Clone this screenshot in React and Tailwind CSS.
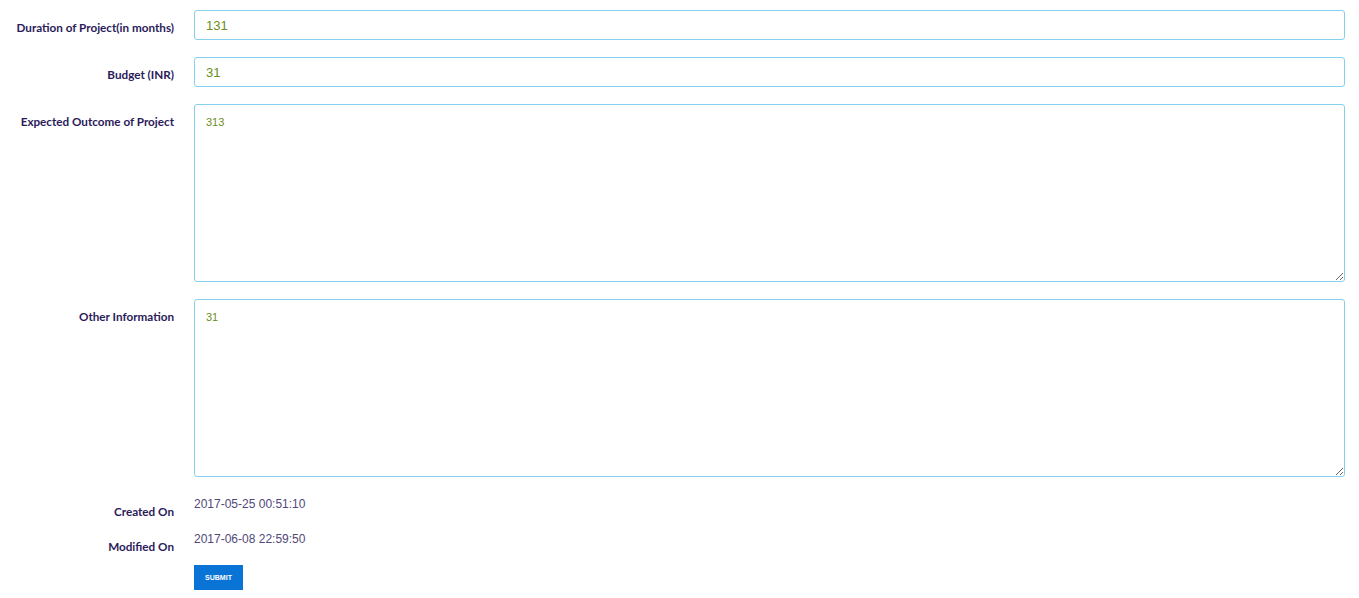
import React from "react";

const labelCls =
  "w-[194px] shrink-0 pr-5 pt-[11px] text-right text-[11.7px] leading-[12px] font-bold text-[#2b1b5a] [font-family:Lato,sans-serif]";
const fieldBorder =
  "w-full border border-[#85d0ef] rounded-[3px] bg-white outline-none text-[#6b8e23] [font-family:'Liberation_Sans',Arial,sans-serif]";

export default function App() {
  return (
    <div className="bg-white min-h-[598px] w-full pt-[10px] pr-[14px]">
      <div className="flex mb-[17px]">
        <div className={labelCls}>Duration of Project(in months)</div>
        <input
          className={`${fieldBorder} h-[30px] px-[11px] text-[13px]`}
          defaultValue="131"
        />
      </div>
      <div className="flex mb-[17px]">
        <div className={labelCls}>Budget (INR)</div>
        <input
          className={`${fieldBorder} h-[30px] px-[11px] text-[13px]`}
          defaultValue="31"
        />
      </div>
      <div className="flex mb-[17px]">
        <div className={labelCls}>Expected Outcome of Project</div>
        <textarea
          className={`${fieldBorder} h-[178px] px-[11px] pt-[11px] text-[11px] leading-[13px] block`}
          defaultValue="313"
        />
      </div>
      <div className="flex mb-[17px]">
        <div className={labelCls}>Other Information</div>
        <textarea
          className={`${fieldBorder} h-[178px] px-[11px] pt-[11px] text-[11px] leading-[13px] block`}
          defaultValue="31"
        />
      </div>
      <div className="flex h-[35px]">
        <div className={labelCls}>Created On</div>
        <div className="pt-[1px] text-[12px] leading-[18px] text-[#52477a] [font-family:'Liberation_Sans',Arial,sans-serif]">
          2017-05-25 00:51:10
        </div>
      </div>
      <div className="flex h-[35px]">
        <div className={labelCls}>Modified On</div>
        <div className="pt-[1px] text-[12px] leading-[18px] text-[#52477a] [font-family:'Liberation_Sans',Arial,sans-serif]">
          2017-06-08 22:59:50
        </div>
      </div>
      <div className="flex pl-[194px] pt-[1px]">
        <button className="w-[49px] h-[25px] bg-[#0a74d6] text-white text-[7px] font-bold leading-none [font-family:'Liberation_Sans',Arial,sans-serif]">
          SUBMIT
        </button>
      </div>
    </div>
  );
}
